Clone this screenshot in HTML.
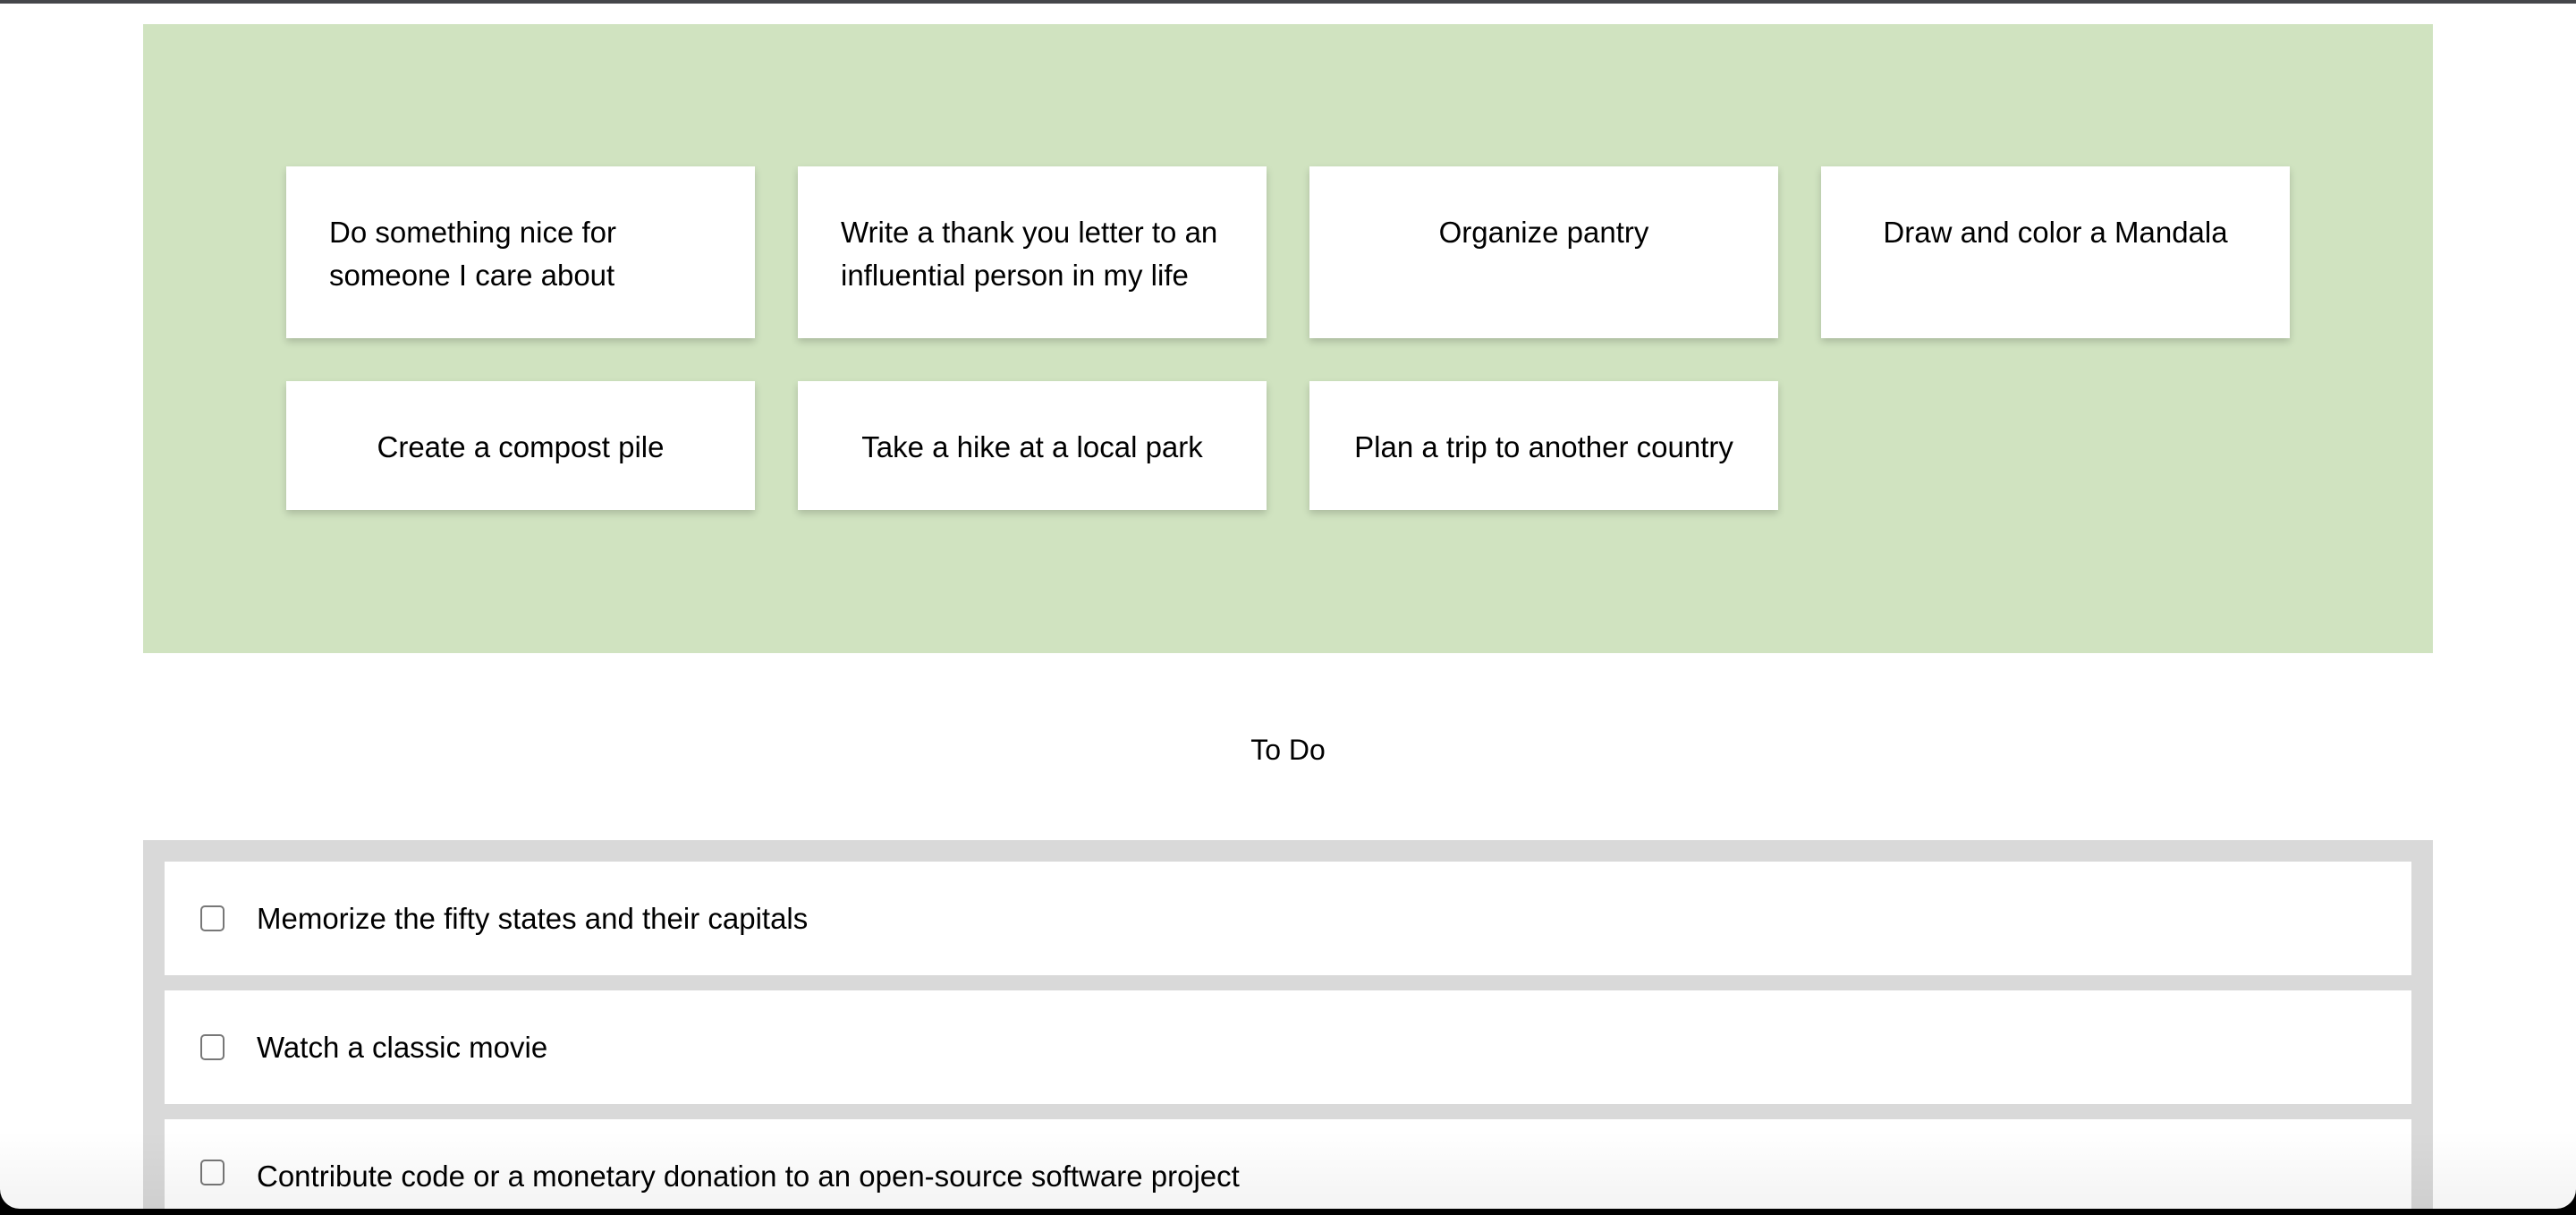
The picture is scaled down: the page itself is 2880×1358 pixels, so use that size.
<!DOCTYPE html>
<html><head><meta charset="utf-8"><style>
*{box-sizing:border-box;margin:0;padding:0}
html,body{width:2880px;height:1358px;overflow:hidden;background:#000;font-family:"Liberation Sans",sans-serif;color:#000}
.win{position:absolute;left:0;top:0;width:2880px;height:1351px;background:#fff;border-radius:0 0 22px 22px;overflow:hidden;border-top:4px solid #45464a}
.green{position:absolute;left:160px;top:23px;width:2560px;height:703px;background:#d0e3c0}
.card{position:absolute;width:524px;background:#fff;box-shadow:0 4px 8px rgba(0,0,0,.18);font-size:33px;line-height:48px;padding:50px 48px 46px;text-align:center}
.card.l{text-align:left}
.todo{position:absolute;left:0;width:2880px;top:812px;text-align:center;font-size:32px;line-height:44px}
.gray{position:absolute;left:160px;top:935px;width:2560px;height:420px;background:#d9d9d9}
.item{position:absolute;left:184px;width:2512px;height:127px;background:#fff;font-size:33px;display:flex;align-items:center}
.cb{width:27px;height:29px;border:2px solid #777;border-radius:5px;margin-left:40px;margin-right:36px;flex:none}
.fade{position:absolute;left:0;top:1260px;width:2880px;height:95px;background:linear-gradient(rgba(0,0,0,0),rgba(0,0,0,.05))}
</style></head><body>
<div class="win">
<div class="green"></div>
<div class="card l" style="left:320px;top:182px;height:192px">Do something nice for someone I care about</div>
<div class="card l" style="left:892px;top:182px;height:192px">Write a thank you letter to an influential person in my life</div>
<div class="card" style="left:1464px;top:182px;height:192px">Organize pantry</div>
<div class="card" style="left:2036px;top:182px;height:192px">Draw and color a Mandala</div>
<div class="card" style="left:320px;top:422px;height:144px">Create a compost pile</div>
<div class="card" style="left:892px;top:422px;height:144px">Take a hike at a local park</div>
<div class="card" style="left:1464px;top:422px;height:144px">Plan a trip to another country</div>
<div class="todo">To Do</div>
<div class="gray"></div>
<div class="item" style="top:959px"><div class="cb"></div>Memorize the fifty states and their capitals</div>
<div class="item" style="top:1103px"><div class="cb"></div>Watch a classic movie</div>
<div class="item" style="top:1247px;height:104px;align-items:flex-start;padding-top:45px"><div class="cb"></div>Contribute code or a monetary donation to an open-source software project</div>
<div class="fade"></div>
</div>
</body></html>
